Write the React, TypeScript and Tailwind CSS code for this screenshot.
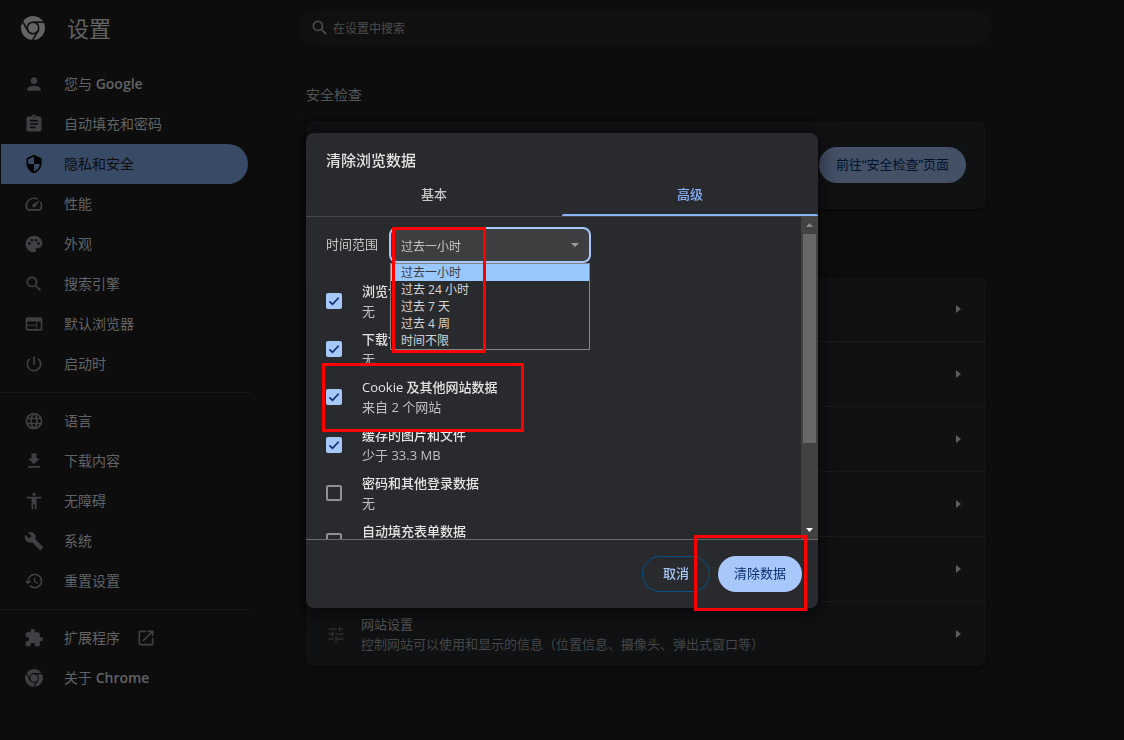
import type { ReactNode } from "react";
import {
  MdPerson,
  MdAssignment,
  MdSecurity,
  MdSpeed,
  MdPalette,
  MdSearch,
  MdWeb,
  MdPowerSettingsNew,
  MdLanguage,
  MdFileDownload,
  MdAccessibility,
  MdBuild,
  MdRestore,
  MdExtension,
  MdOpenInNew,
  MdTune,
} from "react-icons/md";

function ChromeLogo({ size }: { size: number }) {
  return (
    <svg width={size} height={size} viewBox="0 0 24 24" aria-hidden="true">
      <circle cx="12" cy="12" r="12" fill="currentColor" />
      <g stroke="#0d0d0d" strokeWidth="1.6" fill="none">
        <circle cx="12" cy="12" r="5.8" />
        <path d="M12 6.2h12" />
        <path d="M12 6.2h12" transform="rotate(120 12 12)" />
        <path d="M12 6.2h12" transform="rotate(240 12 12)" />
      </g>
    </svg>
  );
}

type NavEntry = {
  icon: ReactNode;
  label: ReactNode;
  active?: boolean;
  external?: boolean;
};

const navGroups: NavEntry[][] = [
  [
    { icon: <MdPerson size={20} />, label: <>您与 <span className="font-semibold">Google</span></> },
    { icon: <MdAssignment size={20} />, label: "自动填充和密码" },
    { icon: <MdSecurity size={20} />, label: "隐私和安全", active: true },
    { icon: <MdSpeed size={20} />, label: "性能" },
    { icon: <MdPalette size={20} />, label: "外观" },
    { icon: <MdSearch size={20} />, label: "搜索引擎" },
    { icon: <MdWeb size={20} />, label: "默认浏览器" },
    { icon: <MdPowerSettingsNew size={20} />, label: "启动时" },
  ],
  [
    { icon: <MdLanguage size={20} />, label: "语言" },
    { icon: <MdFileDownload size={20} />, label: "下载内容" },
    { icon: <MdAccessibility size={20} />, label: "无障碍" },
    { icon: <MdBuild size={20} />, label: "系统" },
    { icon: <MdRestore size={20} />, label: "重置设置" },
  ],
  [
    { icon: <MdExtension size={20} />, label: "扩展程序", external: true },
    { icon: <ChromeLogo size={18} />, label: <>关于 <span className="font-semibold">Chrome</span></> },
  ],
];

function NavItem({ icon, label, active, external }: NavEntry) {
  return (
    <a
      href="#"
      className={
        active
          ? "ml-px mr-0.5 flex h-10 items-center rounded-r-full bg-[#384a66] pl-[23px] text-sm text-[#0d0d0d]"
          : "mr-0.5 flex h-10 items-center pl-6 text-sm text-[#626365]"
      }
    >
      <span
        className={
          active
            ? "mr-5 flex w-5 justify-center text-black"
            : "mr-5 flex w-5 justify-center text-[#3e4043]"
        }
      >
        {icon}
      </span>
      <span>{label}</span>
      {external && (
        <span className="ml-4 text-[#3e4043]">
          <MdOpenInNew size={20} />
        </span>
      )}
    </a>
  );
}

function ArrowRight() {
  return (
    <svg width="5" height="8" viewBox="0 0 5 8" className="text-[#5c5d5f]" aria-hidden="true">
      <path d="M0 0l5 4-5 4z" fill="currentColor" />
    </svg>
  );
}

type ClearOption = { id: string; title: string; detail: string; checked: boolean };

const clearOptions: ClearOption[] = [
  { id: "history", title: "浏览记录", detail: "无", checked: true },
  { id: "downloads", title: "下载记录", detail: "无", checked: true },
  { id: "cookies", title: "Cookie 及其他网站数据", detail: "来自 2 个网站", checked: true },
  { id: "cache", title: "缓存的图片和文件", detail: "少于 33.3 MB", checked: true },
  { id: "passwords", title: "密码和其他登录数据", detail: "无", checked: false },
  { id: "forms", title: "自动填充表单数据", detail: "", checked: false },
];

const ranges = ["过去一小时", "过去 24 小时", "过去 7 天", "过去 4 周", "时间不限"];

function OptionRow({ id, title, detail, checked }: ClearOption) {
  return (
    <div className="flex h-12 shrink-0 items-center">
      <span className="grid size-4 shrink-0">
        <input
          id={id}
          type="checkbox"
          defaultChecked={checked}
          className="peer col-start-1 row-start-1 size-4 appearance-none rounded-xs border-2 border-[#8e918f] checked:border-[#a8c7fa] checked:bg-[#a8c7fa]"
        />
        <svg
          viewBox="0 0 16 16"
          className="pointer-events-none invisible col-start-1 row-start-1 size-4 peer-checked:visible"
          aria-hidden="true"
        >
          <path d="M3.5 8.4l3 3 6.2-6.6" fill="none" stroke="#062e6f" strokeWidth="1.6" />
        </svg>
      </span>
      <label htmlFor={id} className="ml-5 flex h-10 flex-col text-[13px] leading-5">
        <span className="font-medium text-[#e3e3e3]">{title}</span>
        <span className="text-[#c0c1c3]">{detail}</span>
      </label>
    </div>
  );
}

function ClearDataDialog() {
  return (
    <div
      role="dialog"
      aria-labelledby="dialog-title"
      className="relative flex w-full max-w-lg flex-col rounded-lg bg-[#292a2d] shadow-[0_4px_16px_4px_rgba(0,0,0,0.45)]"
    >
      <h2
        id="dialog-title"
        className="px-5 pt-[17px] pb-1.5 text-[15px] leading-5 font-medium text-[#e3e3e3]"
      >
        清除浏览数据
      </h2>
      <div role="tablist" className="flex border-b border-[#47484b] text-[13px]">
        <button
          role="tab"
          aria-selected="false"
          className="h-10 flex-1 border-b-2 border-transparent font-medium text-[#c7c7c7]"
        >
          基本
        </button>
        <button role="tab" aria-selected="true" className="flex h-10 flex-1 flex-col font-medium text-[#8ab4f8]">
          <span className="flex w-full flex-1 items-center justify-center">高级</span>
          <span className="h-0.5 w-full rounded-t-sm bg-[#8ab4f8]" />
        </button>
      </div>

      <div className="flex h-[322px]">
        <div className="flex flex-1 flex-col overflow-hidden px-5 pt-2.5">
          <div className="mb-3.5 flex items-center">
            <label htmlFor="range" className="w-[63px] pb-0.5 text-[13px] leading-5 text-[#c7c7c7]">
              时间范围
            </label>
            <div className="relative w-[202px]">
              <select
                id="range"
                className="block h-9 w-full appearance-none rounded-lg border-2 border-[#a8c7fa] bg-[#3d3e40] pt-1 pl-2.5 text-xs text-[#c7c7c7] outline-none"
              >
                {ranges.map((r) => (
                  <option key={r}>{r}</option>
                ))}
              </select>
              <svg
                width="8"
                height="4"
                viewBox="0 0 8 4"
                className="pointer-events-none absolute top-4 right-3 text-[#9b9c9e]"
                aria-hidden="true"
              >
                <path d="M0 0h8L4 4z" fill="currentColor" />
              </svg>
              <ul
                role="listbox"
                aria-label="时间范围"
                className="absolute top-9 right-px left-px z-10 border border-[#858585] bg-[#292a2d] text-xs leading-[17px] text-[#d6d6d6]"
              >
                {ranges.map((r, i) => (
                  <li
                    key={r}
                    role="option"
                    aria-selected={i === 0}
                    className={i === 0 ? "bg-[#99c8ff] pl-2.5 text-[#3b3b3b]" : "pl-2.5"}
                  >
                    {r}
                  </li>
                ))}
              </ul>
            </div>
          </div>
          {clearOptions.map((o) => (
            <OptionRow key={o.id} {...o} />
          ))}
        </div>

        <div className="flex w-[17px] flex-col items-center bg-[#424242]" aria-hidden="true">
          <div className="flex h-[17px] items-center">
            <svg width="7" height="4" viewBox="0 0 7 4">
              <path d="M0 4h7L3.5 0z" fill="#8b8b8b" />
            </svg>
          </div>
          <div className="h-[209px] w-[13px] bg-[#686868]" />
          <div className="flex-1" />
          <div className="flex h-[17px] items-center">
            <svg width="7" height="4" viewBox="0 0 7 4">
              <path d="M0 0h7L3.5 4z" fill="#ffffff" />
            </svg>
          </div>
        </div>
      </div>

      <div className="flex justify-end gap-2 border-t border-[#68696c] p-4 text-[13px]">
        <button className="h-9 rounded-full border border-[#04558a] px-5 font-medium text-[#a8c7fa]">取消</button>
        <button className="h-9 rounded-full bg-[#a8c7fa] px-4 text-[#062e6f]">清除数据</button>
      </div>

      <div className="pointer-events-none absolute top-[94px] left-[86px] z-20 h-[126px] w-[94px] border-3 border-[#ff0000]" />
      <div className="pointer-events-none absolute top-[230px] left-4 z-20 h-[69px] w-[202px] border-3 border-[#ff0000]" />
      <div className="pointer-events-none absolute top-[402px] left-[388px] z-20 h-[76px] w-[113px] border-3 border-[#ff0000]" />
    </div>
  );
}

export default function App() {
  return (
    <div className="flex min-h-screen bg-[#0d0d0d] font-['Open_Sans','Noto_Sans_CJK_SC',sans-serif] text-[#626365]">
      <aside className="w-[250px] shrink-0">
        <div className="flex h-14 items-center pl-[21px] text-[#626365]">
          <ChromeLogo size={24} />
          <h1 className="ml-[22px] text-[22px] leading-8">设置</h1>
        </div>
        <nav className="pt-2">
          {navGroups.map((group, i) => (
            <div key={i} className={i > 0 ? "mt-2 border-t border-[#191a1b] pt-2" : ""}>
              {group.map((item, j) => (
                <NavItem key={j} {...item} />
              ))}
            </div>
          ))}
        </nav>
      </aside>

      <main className="flex-1 px-[50px]">
        <div className="flex h-14 items-center">
          <label className="flex h-9 w-full max-w-[692px] items-center rounded-full bg-[#101010] pl-2.5">
            <MdSearch size={20} className="text-[#4a4b4c]" />
            <input
              type="text"
              aria-label="在设置中搜索"
              placeholder="在设置中搜索"
              className="ml-[3px] flex-1 bg-transparent pt-0.5 text-xs outline-none placeholder:text-[#4c4d4e]"
            />
          </label>
        </div>
        <div className="max-w-[692px] px-1.5">
          <h2 className="pt-[29px] pb-4 text-sm leading-5 text-[#545556]">安全检查</h2>
          <section className="flex h-[88px] items-center justify-end rounded-lg bg-[#101113] px-5 shadow-[0_1px_3px_1px_rgba(0,0,0,0.3)]">
            <button className="h-9 rounded-full bg-[#435065] px-[17px] text-[13px] text-[#02122c]">
              前往“安全检查”页面
            </button>
          </section>
          <section className="mt-[68px] divide-y divide-[#191a1c] rounded-lg bg-[#101113] shadow-[0_1px_3px_1px_rgba(0,0,0,0.3)]">
            {[0, 1, 2, 3, 4].map((n) => (
              <div key={n} className="flex h-[65px] items-center justify-end pr-[25px]">
                <ArrowRight />
              </div>
            ))}
            <a href="#" className="flex h-16 items-center pr-[25px] pl-5">
              <MdTune size={20} className="text-[#2e2f31]" />
              <span className="ml-[15px] flex flex-1 flex-col text-[13px] leading-5">
                <span className="text-[#545556]">网站设置</span>
                <span className="text-[#454648]">控制网站可以使用和显示的信息（位置信息、摄像头、弹出式窗口等）</span>
              </span>
              <ArrowRight />
            </a>
          </section>
        </div>
      </main>

      <div className="fixed inset-0 flex items-center justify-center">
        <ClearDataDialog />
      </div>
    </div>
  );
}
